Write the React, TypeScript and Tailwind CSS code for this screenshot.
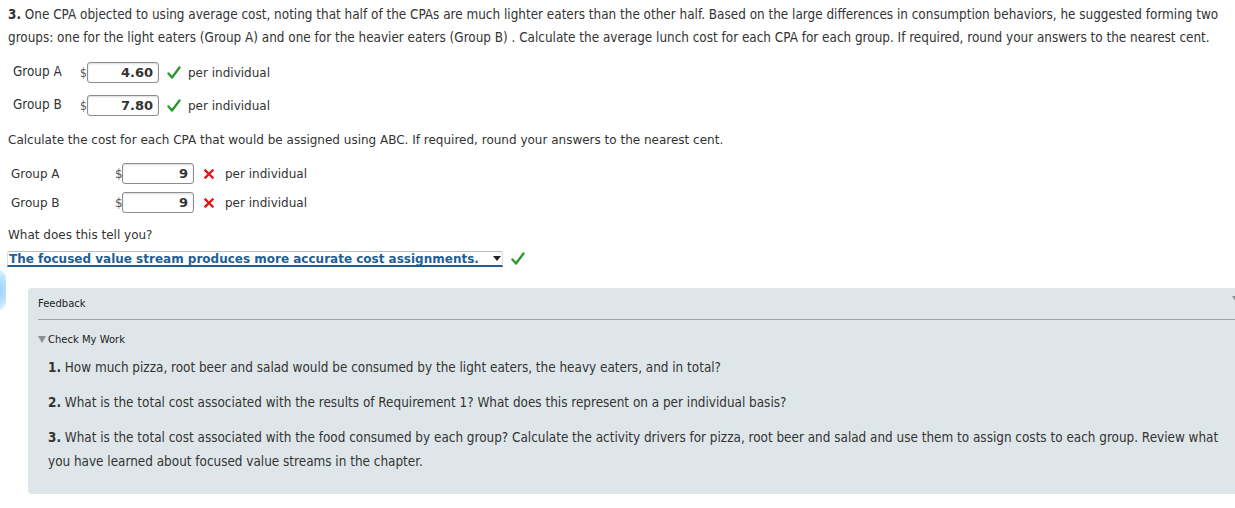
import React from "react";

const cond = { fontFamily: '"DejaVu Sans Condensed", "DejaVu Sans", sans-serif' };
const wide = { fontFamily: '"DejaVu Sans", Verdana, sans-serif' };

function Check() {
  return (
    <svg width="14" height="14" viewBox="0 0 14 14" className="shrink-0">
      <path d="M1.5 7.5 L5 11.5 L12.5 1.5" fill="none" stroke="#2e9a2e" strokeWidth="2.4" strokeLinecap="round" strokeLinejoin="round" />
    </svg>
  );
}

function Cross() {
  return (
    <svg width="10" height="10" viewBox="0 0 10 10" className="shrink-0">
      <path d="M1.5 1.5 L8.5 8.5 M8.5 1.5 L1.5 8.5" stroke="#e3141a" strokeWidth="2.3" strokeLinecap="square" />
    </svg>
  );
}

function AnswerBox({ value, w }: { value: string; w: string }) {
  return (
    <div
      className={`${w} h-[21px] border border-[#8d8d8d] rounded-[3px] bg-white shadow-[inset_0_1px_2px_rgba(0,0,0,0.15)] flex items-center justify-end pr-[5px] text-[13px] font-bold text-[#333]`}
      style={wide}
    >
      {value}
    </div>
  );
}

export default function App() {
  return (
    <div className="relative w-[1235px] h-[508px] overflow-hidden bg-white text-[#333]">
      {/* focus glow at left edge */}
      <div className="absolute left-[-16px] top-[268px] w-[22px] h-[44px] rounded-full bg-[radial-gradient(circle,#8ccfff_0%,#c4e6ff_65%,rgba(255,255,255,0)_100%)]" />

      <div className="px-2 pt-[3px]">
        <p className="text-[13.4px] leading-[23px]" style={cond}>
          <b>3.</b> One CPA objected to using average cost, noting that half of the CPAs are much lighter eaters than the other half. Based on the large differences in consumption behaviors, he suggested forming two groups: one for the light eaters (Group A) and one for the heavier eaters (Group B) . Calculate the average lunch cost for each CPA for each group. If required, round your answers to the nearest cent.
        </p>

        <div className="mt-[13px] flex flex-col gap-[12px] text-[13.4px]" style={cond}>
          {[
            ["Group A", "4.60"],
            ["Group B", "7.80"],
          ].map(([g, v]) => (
            <div key={g} className="flex items-center h-[21px]">
              <span className="w-[72px] pl-[5px]">{g}</span>
              <span className="w-[7px] text-[12px] text-[#555]">$</span>
              <AnswerBox value={v} w="w-[72px]" />
              <span className="ml-[8px]"><Check /></span>
              <span className="ml-[7px] text-[12px]" style={wide}>per individual</span>
            </div>
          ))}
        </div>

        <p className="mt-[16px] text-[12px] leading-[16px]" style={wide}>
          Calculate the cost for each CPA that would be assigned using ABC. If required, round your answers to the nearest cent.
        </p>

        <div className="mt-[15px] flex flex-col gap-[8px] text-[12px]" style={wide}>
          {["Group A", "Group B"].map((g) => (
            <div key={g} className="flex items-center h-[21px]">
              <span className="w-[107px] pl-[3px]">{g}</span>
              <span className="w-[7px] text-[#555]">$</span>
              <AnswerBox value="9" w="w-[72px]" />
              <span className="ml-[10px]"><Cross /></span>
              <span className="ml-[11px]">per individual</span>
            </div>
          ))}
        </div>

        <p className="mt-[14px] text-[12px] leading-[16px]" style={wide}>
          What does this tell you?
        </p>

        <div className="mt-[8px] flex items-center">
          <div
            className="w-[496px] h-[16px] ml-[-1px] border-t border-x border-t-[#bbb] border-x-[#ddd] border-b-2 border-b-[#1f5f96] rounded-t-[2px] flex items-center justify-between text-[12px] font-bold text-[#1f5f96] leading-none"
            style={wide}
          >
            <span className="pl-px">The focused value stream produces more accurate cost assignments.</span>
            <svg width="8" height="5" viewBox="0 0 8 5" className="mr-[1px]">
              <path d="M0 0 H8 L4 5 Z" fill="#222" />
            </svg>
          </div>
          <span className="ml-[8px]"><Check /></span>
        </div>
      </div>

      {/* feedback panel */}
      <div className="ml-[28px] mt-[21px] w-[1230px] h-[206px] rounded-[4px] bg-[#dfe6e9] pl-[10px]">
        <div className="relative h-[32px] border-b border-[#9aa2a5] flex items-center text-[10px] text-[#222]" style={wide}>
          <span>Feedback</span>
          <svg width="8" height="6" viewBox="0 0 8 6" className="absolute left-[1194px] top-[8px]">
            <path d="M0 0 H8 L4 6 Z" fill="#8a8f92" />
          </svg>
        </div>
        <div className="mt-[12px] flex items-center text-[10px] text-[#222]" style={wide}>
          <svg width="8" height="7" viewBox="0 0 8 7" className="mr-[2px]">
            <path d="M0 0 H8 L4 7 Z" fill="#8a8f92" />
          </svg>
          <span>Check My Work</span>
        </div>
        <div className="mt-[9px] pl-[10px] pr-[10px] text-[13.4px] leading-[24px] flex flex-col gap-[11px]" style={cond}>
          <p><b>1.</b> How much pizza, root beer and salad would be consumed by the light eaters, the heavy eaters, and in total?</p>
          <p><b>2.</b> What is the total cost associated with the results of Requirement 1? What does this represent on a per individual basis?</p>
          <p className="w-[1185px]">
            <b>3.</b> What is the total cost associated with the food consumed by each group? Calculate the activity drivers for pizza, root beer and salad and use them to assign costs to each group. Review what you have learned about focused value streams in the chapter.
          </p>
        </div>
      </div>
    </div>
  );
}
